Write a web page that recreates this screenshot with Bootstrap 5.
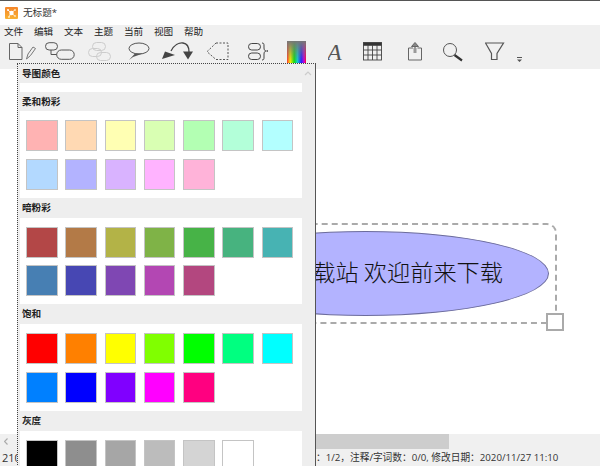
<!DOCTYPE html>
<html lang="zh">
<head>
<meta charset="utf-8">
<title>无标题</title>
<link href="https://cdn.jsdelivr.net/npm/bootstrap@5.3.0/dist/css/bootstrap.min.css" rel="stylesheet">
<style>
html,body{height:466px;overflow:hidden;background:#fff}
body{font-family:"Open Sans","Noto Sans CJK SC",sans-serif;font-size:10px;color:#222}
.app-win{width:600px;height:466px;border-top:1px solid #555;position:relative;overflow:hidden}
.title-bar{height:24px;padding-left:5px;gap:5px;font-size:9.6px;color:#333}
.menu-row{height:13px;background:#f0f0f0;padding-left:4px;gap:10.8px;line-height:13px;font-size:9.6px}
.tool-row{height:31px;background:#f0f0f0;align-items:flex-start;padding-top:2px}
.tool-row svg{height:24px;display:block;flex:none}
.i-new{width:27px;margin-left:9px}.i-map{width:32px;margin-left:9px}.i-off{width:25px;margin-left:11px}
.i-bub{width:23px;margin-left:15px}.i-arr{width:34px;margin-left:11px}.i-sel{width:25px;margin-left:10px}
.i-brk{width:22px;margin-left:17px}.i-grd{width:19px;margin-left:17px}.i-a{width:17px;margin-left:22px}
.i-tbl{width:20px;margin-left:18px}.i-shr{width:16px;margin-left:25px}.i-mag{width:21px;margin-left:19px}
.i-fun{width:21px;margin-left:21px}.i-drp{width:7px;margin-left:10px}
.canvas-area{height:365px;position:relative;overflow:hidden}
.sel-box{position:absolute;left:150px;width:407px;top:154px;height:101px;border:2px dashed #aaa;border-radius:0 10px 0 0}
.sel-handle{position:absolute;left:546px;top:244px;width:18px;height:18px;background:#fff;border:2px solid #aaa}
.node-oval{position:absolute;left:182px;width:367px;top:162px;height:85px;border-radius:50%;background:#b3b3ff;border:1px solid #6c6c9c;display:flex;align-items:center;justify-content:flex-end;padding:0 45px 3px 0;font:300 23.2px/1 "Noto Sans CJK SC",sans-serif;color:#111;white-space:nowrap}
.scroll-row{height:15px;background:#f0f0f0}
.scroll-arrow{width:20px;padding:4px 0 0 4px}
.scroll-arrow svg{display:block}
.scroll-thumb{width:429px;background:#cdcdcd}
.stat-row{height:17px;background:#f0f0f0;font-size:9.7px;line-height:17px;color:#333;padding-left:2px;white-space:nowrap}
.stat-gap{width:314px;flex:none;font-size:11px}
.color-pop{position:absolute;left:17px;top:62px;width:299px;height:420px;background:#eee;border:1px dotted #444;border-right:1px solid #555;padding-left:2px;z-index:5}
.pop-body{width:282px}
.pop-head{height:20px;line-height:19px;padding-left:2px;font-weight:700;font-size:9.6px;color:#222}
.pop-head-first{height:19px}
.pop-fill{height:9px;background:#fff}
.pop-swatches{background:#fff;padding:9px 0 8px 6px;display:grid;grid-template-columns:repeat(7,31.5px);column-gap:7.8px;row-gap:7.7px}
.sw{height:31px;border:1px solid #c4c4c4}
.pop-up{position:absolute;right:3px;top:5px;width:8px;height:8px}
.c1{background:#ffb3b3}.c2{background:#ffd9b3}.c3{background:#ffffb3}.c4{background:#d9ffb3}.c5{background:#b3ffb3}.c6{background:#b3ffd9}.c7{background:#b3ffff}.c8{background:#b3d9ff}.c9{background:#b3b3ff}.c10{background:#d9b3ff}.c11{background:#ffb3ff}.c12{background:#ffb3d9}
.d1{background:#b34747}.d2{background:#b37a47}.d3{background:#b3b347}.d4{background:#7fb347}.d5{background:#47b347}.d6{background:#47b37f}.d7{background:#47b3b3}.d8{background:#477fb3}.d9{background:#4747b3}.d10{background:#7f47b3}.d11{background:#b347b3}.d12{background:#b3477f}
.s1{background:#f00}.s2{background:#ff8000}.s3{background:#ff0}.s4{background:#80ff00}.s5{background:#0f0}.s6{background:#00ff80}.s7{background:#0ff}.s8{background:#0080ff}.s9{background:#00f}.s10{background:#8000ff}.s11{background:#f0f}.s12{background:#ff0080}
.g1{background:#000}.g2{background:#8e8e8e}.g3{background:#a6a6a6}.g4{background:#bcbcbc}.g5{background:#d4d4d4}.g6{background:#fff}
</style>
</head>
<body>
<div class="app-win d-flex flex-column">
  <div class="title-bar d-flex align-items-center">
    <svg width="13" height="12" viewBox="0 0 13 12"><defs><linearGradient id="lg" x2="0" y2="1"><stop offset="0" stop-color="#f5852a"/><stop offset="1" stop-color="#f9b233"/></linearGradient></defs><rect width="13" height="12" rx="1" fill="url(#lg)"/><path d="M6 6 3 3M6 6l4-3M6 6l4 3M6 6 4 10" stroke="#fff" stroke-width=".8"/><circle cx="6.500" cy="6" r="2.200" fill="#fff"/><circle cx="3" cy="3" r="1" fill="#fff"/><circle cx="10" cy="3" r="1" fill="#ffe0b0"/><circle cx="10" cy="9" r="1" fill="#ffe0b0"/><circle cx="4" cy="10" r="1" fill="#ffe9b0"/></svg>
    <span>无标题*</span>
  </div>
  <div class="menu-row d-flex"><span>文件</span><span>编辑</span><span>文本</span><span>主题</span><span>当前</span><span>视图</span><span>帮助</span></div>
  <div class="tool-row d-flex">
    <svg class="i-new" viewBox="0 0 27 24" fill="none" stroke="#666"><path d="M.5 3.500h8.500l4 4v12H.5z"/><path d="M9 3.500v4h4"/><path d="M17.500 19l1.500-5 5-7 2.500 1.500-5 7z" stroke="#777"/></svg>
    <svg class="i-map" viewBox="0 0 32 24" fill="none" stroke="#555"><rect x=".5" y="2.700" width="12" height="7.300" rx="3.600"/><rect x="11.700" y="10" width="17.500" height="9.300" rx="4.600"/><path d="M6 10v4.500h5.700"/></svg>
    <svg class="i-off" viewBox="0 0 25 24" fill="none" stroke="#ccc"><rect x="4.500" y="2.500" width="13" height="8" rx="4"/><rect x=".5" y="8.500" width="13" height="8" rx="4"/><rect x="8.500" y="12.500" width="14" height="8" rx="4"/></svg>
    <svg class="i-bub" viewBox="0 0 23 24"><ellipse cx="11" cy="8.500" rx="10" ry="5.500" fill="#f0f0f0" stroke="#555"/><path d="M1 20l6-6.500h8l-10 3.500z" fill="#555"/></svg>
    <svg class="i-arr" viewBox="0 0 34 24" fill="none"><path d="M9 11C12 5 17 2.500 21 3c4 .5 6 3 6 9" stroke="#444" stroke-width="1.300"/><path d="M0 19l3-7.500 10 3.500z" fill="#444"/><path d="M21 11.500h10l-5 8z" fill="#444"/></svg>
    <svg class="i-sel" viewBox="0 0 25 24" fill="none" stroke="#555" stroke-dasharray="2 1.500"><path d="M10 3h12v16.500H10L1 11.700z"/></svg>
    <svg class="i-brk" viewBox="0 0 22 24" fill="none" stroke="#444"><rect x=".5" y="3.500" width="12" height="6.500" rx="3.200"/><rect x=".5" y="13" width="12" height="6.500" rx="3.200"/><path d="M14 3c2 0 2 1 2 3v2c0 2 1 3 2 3-1 0-2 1-2 3v3c0 2 0 3-2 3"/><path d="M18.500 11H20" stroke-width="1.500"/></svg>
    <svg class="i-grd" viewBox="0 0 19 24"><defs><linearGradient id="gh"><stop offset="0" stop-color="#f33"/><stop offset=".17" stop-color="#fe0"/><stop offset=".38" stop-color="#1d1"/><stop offset=".55" stop-color="#1cc"/><stop offset=".75" stop-color="#22f"/><stop offset=".9" stop-color="#c0d"/><stop offset="1" stop-color="#f03"/></linearGradient><linearGradient id="gv" x2="0" y2="1"><stop offset="0" stop-color="#777"/><stop offset=".95" stop-color="#777" stop-opacity="0"/></linearGradient></defs><rect y="1" width="19" height="22" fill="url(#gh)"/><rect y="1" width="19" height="22" fill="url(#gv)"/></svg>
    <svg class="i-a" viewBox="0 0 17 24"><text x="-1" y="20" font-family="Liberation Serif" font-style="italic" font-size="24" fill="#555">A</text></svg>
    <svg class="i-tbl" viewBox="0 0 20 24" fill="none" stroke="#444" stroke-width=".9"><rect x=".5" y="2.700" width="18" height="17.300"/><rect x=".5" y="2.700" width="18" height="2.600" fill="#333"/><path d="M5 5v15M9.500 5v15M14 5v15M.5 10h18M.5 15h18"/></svg>
    <svg class="i-shr" viewBox="0 0 16 24" fill="none" stroke="#666"><path d="M5 8H.5v12h13V8H9.500"/><path d="M7 13V4" stroke-width="1.200"/><path d="M3.500 6.500 7 2.500l3.500 4z" fill="#888"/><path d="M5.500 8h3v5h-3z" fill="#999" stroke="none"/></svg>
    <svg class="i-mag" viewBox="0 0 21 24" fill="none" stroke="#555"><circle cx="7" cy="10" r="6.500"/><path d="M11.500 15l7.500 5.500" stroke="#333" stroke-width="2.200"/></svg>
    <svg class="i-fun" viewBox="0 0 21 24" fill="none" stroke="#555" stroke-width="1.200"><path d="M.5 3h18l-6.500 10.500v6H6.500v-6z"/></svg>
    <svg class="i-drp" viewBox="0 0 7 24" fill="#555"><path d="M1 17h5v1H1zM1 19.500h5L3.500 22z"/></svg>
  </div>
  <div class="canvas-area">
    <div class="sel-box"></div>
    <div class="node-oval">下载站 欢迎前来下载</div>
    <div class="sel-handle"></div>
  </div>
  <div class="scroll-row d-flex"><div class="scroll-arrow"><svg width="4" height="7" viewBox="0 0 4 7" fill="none" stroke="#aaa" stroke-width="1.200"><path d="M3.500.5l-3 3 3 3"/></svg></div><div class="scroll-thumb"></div></div>
  <div class="stat-row d-flex"><span class="stat-gap">210</span><span>：1/2，注释/字词数：0/0, 修改日期：2020/11/27 11:10</span></div>
  <div class="color-pop">
    <svg class="pop-up" viewBox="0 0 8 8" fill="none" stroke="#ccc" stroke-width="1.200"><path d="M1 6l3-3 3 3"/></svg>
    <div class="pop-body">
      <div class="pop-head pop-head-first">导图颜色</div>
      <div class="pop-fill"></div>
      <div class="pop-head pop-head-first">柔和粉彩</div>
      <div class="pop-swatches"><div class="sw c1"></div><div class="sw c2"></div><div class="sw c3"></div><div class="sw c4"></div><div class="sw c5"></div><div class="sw c6"></div><div class="sw c7"></div><div class="sw c8"></div><div class="sw c9"></div><div class="sw c10"></div><div class="sw c11"></div><div class="sw c12"></div></div>
      <div class="pop-head">暗粉彩</div>
      <div class="pop-swatches"><div class="sw d1"></div><div class="sw d2"></div><div class="sw d3"></div><div class="sw d4"></div><div class="sw d5"></div><div class="sw d6"></div><div class="sw d7"></div><div class="sw d8"></div><div class="sw d9"></div><div class="sw d10"></div><div class="sw d11"></div><div class="sw d12"></div></div>
      <div class="pop-head">饱和</div>
      <div class="pop-swatches"><div class="sw s1"></div><div class="sw s2"></div><div class="sw s3"></div><div class="sw s4"></div><div class="sw s5"></div><div class="sw s6"></div><div class="sw s7"></div><div class="sw s8"></div><div class="sw s9"></div><div class="sw s10"></div><div class="sw s11"></div><div class="sw s12"></div></div>
      <div class="pop-head">灰度</div>
      <div class="pop-swatches"><div class="sw g1"></div><div class="sw g2"></div><div class="sw g3"></div><div class="sw g4"></div><div class="sw g5"></div><div class="sw g6"></div></div>
    </div>
  </div>
</div>
</body>
</html>
